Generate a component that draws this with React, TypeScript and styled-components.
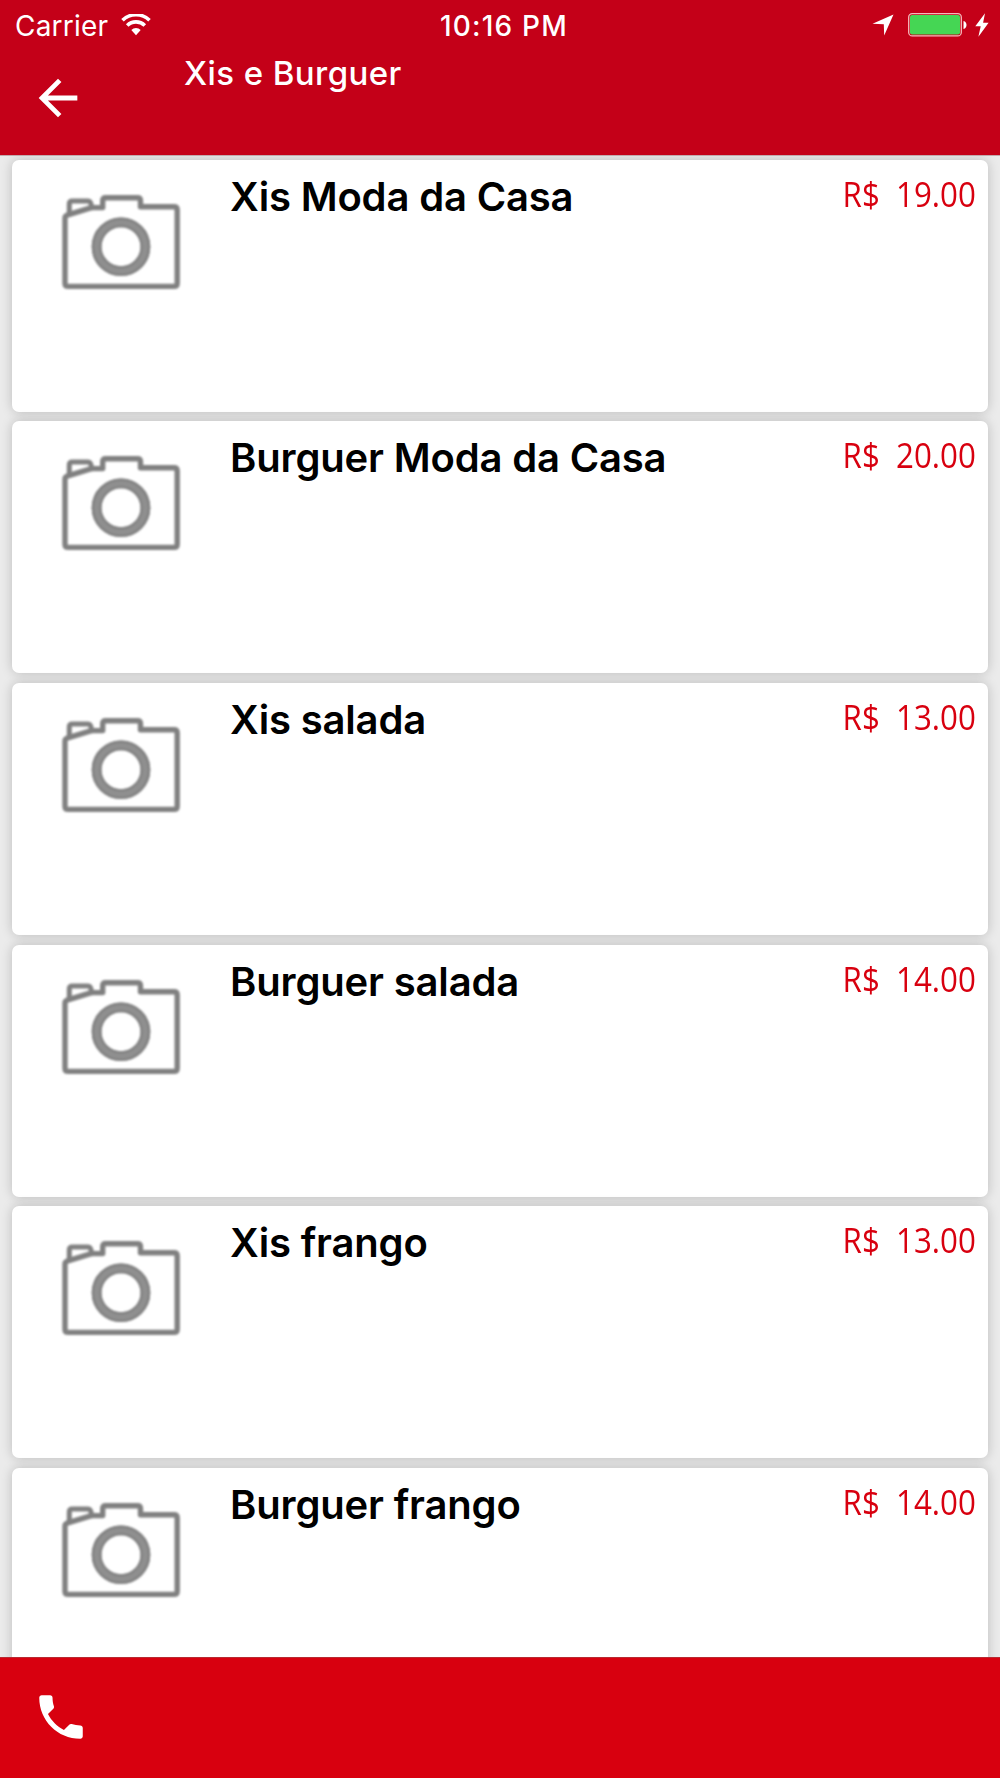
import React from "react";
import styled, { createGlobalStyle } from "styled-components";

const GlobalStyle = createGlobalStyle`
  * { box-sizing: border-box; }
  body { margin: 0; background: #ebebeb; }
`;

const Screen = styled.div`
  width: 1000px;
  height: 1778px;
  display: flex;
  flex-direction: column;
  overflow: hidden;
  background: #ebebeb;
  font-family: Inter, "Liberation Sans", sans-serif;
`;

const Header = styled.header`
  flex: none;
  height: 155px;
  background: #c40018;
  color: #fff;
`;

const StatusBar = styled.div`
  display: grid;
  grid-template-columns: 1fr auto 1fr;
  align-items: center;
  height: 50px;
  padding: 0 11px 0 15px;
`;

const StatusGroup = styled.div<{ $end?: boolean }>`
  display: flex;
  align-items: center;
  justify-content: ${(p) => (p.$end ? "flex-end" : "flex-start")};
`;

const StatusText = styled.span<{ $weight: number; $spacing: number }>`
  padding-top: 1px;
  font-size: 28px;
  line-height: 34px;
  font-weight: ${(p) => p.$weight};
  letter-spacing: ${(p) => p.$spacing}px;
  white-space: nowrap;
`;

const Clock = styled(StatusText)`
  padding-left: 4px;
`;

const Icon = styled.svg`
  display: block;
  flex: none;
`;

const NavBar = styled.div`
  display: flex;
  align-items: flex-start;
  height: 104px;
`;

const BackButton = styled.button`
  width: 184px;
  height: 96px;
  padding: 0 0 0 29px;
  border: 0;
  background: none;
  display: flex;
  align-items: center;
`;

const Title = styled.h1`
  margin: 3px 0 0;
  font-size: 33px;
  line-height: 40px;
  font-weight: 500;
  letter-spacing: 0.42px;
  white-space: nowrap;
`;

const List = styled.main`
  flex: 1;
  min-height: 0;
  overflow: hidden;
  padding: 3.5px 12px 0;
  border-top: 1px solid #c3a9ac;
  display: flex;
  flex-direction: column;
  gap: 9.7px;
`;

const Card = styled.article`
  flex: none;
  height: 252px;
  display: grid;
  grid-template-columns: 218px 1fr auto;
  align-items: start;
  padding-right: 12px;
  background: #fff;
  border-radius: 7px;
  box-shadow: 0 0 12px rgba(0, 0, 0, 0.2);
`;

const Photo = styled.div`
  padding: 30px 0 0 45.5px;
`;

const Name = styled.h2`
  margin: 13px 0 0;
  font-size: 40px;
  line-height: 48px;
  font-weight: 600;
  letter-spacing: -0.16px;
  color: #000;
  white-space: nowrap;
`;

const Price = styled.span`
  margin-top: 11px;
  font-family: "Open Sans", "Noto Sans", sans-serif;
  font-size: 34px;
  line-height: 46px;
  color: #d8000f;
  white-space: pre;
  transform: scaleX(0.92);
  transform-origin: right center;
`;

const Footer = styled.footer`
  flex: none;
  height: 121px;
  display: flex;
  align-items: center;
  padding: 0 0 2px 31.5px;
  background: #d8000f;
  border-top: 1px solid #b82a32;
`;

const WifiIcon = () => (
  <Icon width="30" height="22" viewBox="0 0 30 22" fill="none" stroke="#fff">
    <path d="M1.5 6.3a19.2 19.2 0 0 1 27 0" strokeWidth="3.6" />
    <path d="M6.2 11.5a12.5 12.5 0 0 1 17.6 0" strokeWidth="3.6" />
    <path d="M10.3 16a6.8 6.8 0 0 1 9.4 0L15 21.2z" fill="#fff" stroke="none" />
  </Icon>
);

const BackIcon = () => (
  <Icon width="58" height="58" viewBox="0 0 24 24" fill="#fff">
    <path d="M20 11H7.83l5.59-5.59L12 4l-8 8 8 8 1.41-1.41L7.83 13H20v-2z" />
  </Icon>
);

const LocationIcon = () => (
  <Icon width="22" height="22" viewBox="0 0 22 22" fill="#fff">
    <path d="M21.5 0.5 12.2 21.4 11.8 10.2 0.5 9.8z" />
  </Icon>
);

const BatteryIcon = () => (
  <Icon width="59" height="24" viewBox="0 0 59 24">
    <rect x="0.7" y="0.7" width="52.6" height="22.2" rx="3.5" fill="none" stroke="#f5b9bd" strokeWidth="1.3" />
    <rect x="2" y="2" width="50" height="19.6" rx="2" fill="#45d654" />
    <path d="M55.5 8c4 .8 4 7.2 0 8z" fill="#fff" />
  </Icon>
);

const BoltIcon = () => (
  <Icon width="14" height="24" viewBox="0 0 14 24" fill="#fff">
    <path d="M10 0.2 0.3 13.2H5.7L3.4 23.8 13.6 9.8H8.1z" />
  </Icon>
);

const CameraDrawing = styled(Icon)`
  filter: blur(0.8px);
`;

const CameraIcon = () => (
  <CameraDrawing width="126" height="104" viewBox="0 0 126 104" fill="none" stroke="#808080" strokeWidth="5.4" strokeLinejoin="round">
    <path d="M7 28Q7 26 9 25.2L31 18.4Q33 17.6 35 17.6H44.7V11q0-3.2 3-3.2H79.5q3 0 3 3.2v5.8h33.5q3.2 0 3.2 3.2V93.2q0 3.2-3.2 3.2H10.2q-3.2 0-3.2-3.2z" />
    <path d="M11.3 24.5V14q0-3 3-3H30q3 0 3.4 5.5" strokeWidth="5" />
    <circle cx="63" cy="56.8" r="24.4" strokeWidth="9.8" stroke="#8f8f8f" />
    <circle cx="63" cy="56.8" r="28.2" strokeWidth="2.2" stroke="#808080" />
    <circle cx="63" cy="56.8" r="20.5" strokeWidth="2" stroke="#808080" />
  </CameraDrawing>
);

const PhoneIcon = () => (
  <Icon width="58" height="58" viewBox="0 0 24 24" fill="#fff">
    <path d="M6.62 10.79c1.44 2.83 3.76 5.14 6.59 6.59l2.2-2.2c.27-.27.67-.36 1.02-.24 1.12.37 2.33.57 3.57.57.55 0 1 .45 1 1V20c0 .55-.45 1-1 1-9.39 0-17-7.61-17-17 0-.55.45-1 1-1h3.5c.55 0 1 .45 1 1 0 1.25.2 2.45.57 3.57.11.35.03.74-.25 1.02l-2.2 2.2z" />
  </Icon>
);

const Indicators = styled(StatusGroup)`
  gap: 8px;
`;

const LocationSlot = styled.span`
  margin-right: 6px;
`;

const WifiSlot = styled.span`
  margin-left: 12.5px;
`;

const items = [
  { name: "Xis Moda da Casa", price: "19.00" },
  { name: "Burguer Moda da Casa", price: "20.00" },
  { name: "Xis salada", price: "13.00" },
  { name: "Burguer salada", price: "14.00" },
  { name: "Xis frango", price: "13.00" },
  { name: "Burguer frango", price: "14.00" },
];

export default function App() {
  return (
    <Screen>
      <GlobalStyle />
      <Header>
        <StatusBar>
          <StatusGroup>
            <StatusText $weight={400} $spacing={0.2}>Carrier</StatusText>
            <WifiSlot>
              <WifiIcon />
            </WifiSlot>
          </StatusGroup>
          <Clock $weight={500} $spacing={1.2}>10:16 PM</Clock>
          <Indicators $end>
            <LocationSlot>
              <LocationIcon />
            </LocationSlot>
            <BatteryIcon />
            <BoltIcon />
          </Indicators>
        </StatusBar>
        <NavBar>
          <BackButton aria-label="Voltar">
            <BackIcon />
          </BackButton>
          <Title>Xis e Burguer</Title>
        </NavBar>
      </Header>
      <List>
        {items.map((item) => (
          <Card key={item.name}>
            <Photo>
              <CameraIcon />
            </Photo>
            <Name>{item.name}</Name>
            <Price>{"R$  " + item.price}</Price>
          </Card>
        ))}
      </List>
      <Footer>
        <PhoneIcon />
      </Footer>
    </Screen>
  );
}
